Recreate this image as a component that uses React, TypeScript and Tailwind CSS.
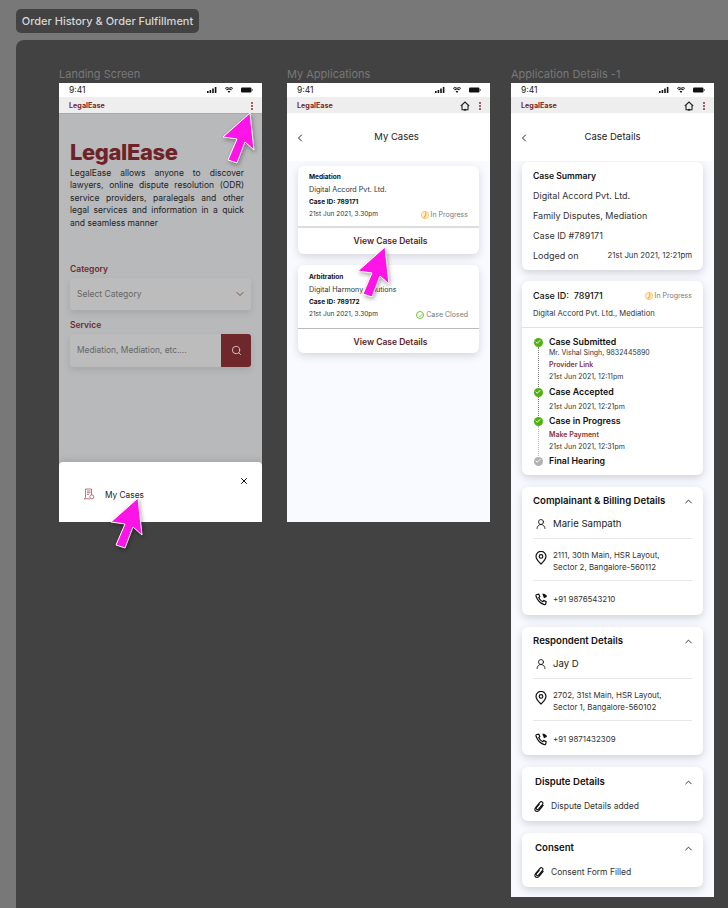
import { ChevronDown, ChevronLeft, ChevronUp, Check, Search, UserRound, X } from 'lucide-react';
import type { ReactNode } from 'react';

// Order history board: three phone frames with pink callout arrows on top

const StatusBar = () => (
  <div className="flex h-[14px] items-center justify-between bg-white pl-[10px] pr-[9px] text-[8.5px] font-normal text-[#222]">
    <span>9:41</span>
    <div className="flex items-center gap-[8px]">
      <svg width="10" height="6" viewBox="0 0 10 6" fill="#111">
        <rect x="0" y="4" width="1.6" height="2" />
        <rect x="2.6" y="3" width="1.6" height="3" />
        <rect x="5.2" y="1.5" width="1.6" height="4.5" />
        <rect x="7.8" y="0" width="1.6" height="6" />
      </svg>
      <svg width="8" height="6" viewBox="0 0 8 6" fill="#111">
        <path d="M4 6 2.7 4.4a2 2 0 0 1 2.6 0zM1.9 3.5 1.1 2.6a4.4 4.4 0 0 1 5.8 0l-.8.9a3.2 3.2 0 0 0-4.2 0zM.5 1.9 0 1.2a6 6 0 0 1 8 0l-.5.7a5.3 5.3 0 0 0-7 0z" />
      </svg>
      <svg width="12" height="6" viewBox="0 0 12 6" fill="#111">
        <rect x="0" y="0.5" width="10.5" height="5" rx="1.2" />
        <rect x="11" y="2" width="1" height="2" fill="#888" />
      </svg>
    </div>
  </div>
);

const Dots = () => (
  <span className="flex flex-col gap-[1px]">
    <span className="h-[2px] w-[2px] rounded-full bg-[#8a2f36]" />
    <span className="h-[2px] w-[2px] rounded-full bg-[#8a2f36]" />
    <span className="h-[2px] w-[2px] rounded-full bg-[#8a2f36]" />
  </span>
);

const HomeIcon = () => (
  <svg width="10" height="10" viewBox="0 0 10 10" fill="none" stroke="#222" strokeWidth="1.1">
    <path d="M.8 5 5 1l4.2 4" />
    <path d="M2 4.2v4.6h6V4.2" />
    <path d="M3.8 8.8h2.4" strokeWidth="1.8" />
  </svg>
);

const AppBar = ({ home }: { home?: boolean }) => (
  <div className="flex h-[16px] items-center justify-between bg-[#eeeeee] pl-[10px] pr-[9px] pt-[2px]">
    <span className="text-[7.2px] font-bold text-[#7a2a30]">LegalEase</span>
    <div className="flex items-center gap-[9px]">
      {home && <HomeIcon />}
      <Dots />
    </div>
  </div>
);

const PageTitle = ({ title, className }: { title: string; className?: string }) => (
  <div className={`relative flex h-[48px] items-center justify-center bg-white pt-px text-[9.5px] text-[#222] ${className ?? ''}`}>
    <ChevronLeft className="absolute left-[7px] h-[12px] w-[12px] text-[#222]" strokeWidth={2} />
    {title}
  </div>
);

const ProgressIcon = () => (
  <svg width="8" height="8" viewBox="0 0 8 8">
    <circle cx="4" cy="4" r="3.6" fill="#fff3d6" stroke="#fbb13c" strokeWidth="0.7" />
    <path d="M4 .4A3.6 3.6 0 0 1 2 7L4 4z" fill="#fbb13c" />
  </svg>
);

const ClosedIcon = () => (
  <span className="flex h-[8px] w-[8px] items-center justify-center rounded-full border border-[#6cc32b]">
    <Check className="h-[5px] w-[5px] text-[#6cc32b]" strokeWidth={4} />
  </span>
);

const CaseCard = ({ type, company, id, status, icon, top, rule }: { type: string; company: string; id: string; status: string; icon: ReactNode; top: string; rule: string }) => (
  <div className="h-[88px] rounded-[6px] bg-white px-[11px] shadow-[0_3px_8px_rgba(0,0,0,0.14)]">
    <div className={`text-[6.5px] text-[#333] ${top}`}>
      <div className="flex h-[12.4px] items-center font-bold text-[#111]">{type}</div>
      <div className="flex h-[12.4px] items-center text-[7.2px]">{company}</div>
      <div className="flex h-[12.4px] items-center font-bold text-[#111]">Case ID: {id}</div>
      <div className="flex h-[12.4px] items-center justify-between">
        <span>21st Jun 2021, 3.30pm</span>
        <span className="flex items-center gap-[2px] text-[7px] text-[#777]">
          {icon}
          {status}
        </span>
      </div>
    </div>
    <div className={`-mx-[11px] flex items-center justify-center pl-[4px] text-[8.5px] font-semibold text-[#5b2226] ${rule}`}>
      View Case Details
    </div>
  </div>
);

const Card = ({ className, children }: { className: string; children: ReactNode }) => (
  <div className={`rounded-[6px] bg-white shadow-[0_3px_8px_rgba(0,0,0,0.16)] ${className}`}>{children}</div>
);

const StepDot = ({ done }: { done?: boolean }) => (
  <span className={`flex h-[9px] w-[9px] shrink-0 items-center justify-center rounded-full ${done ? 'bg-[#4fb30d]' : 'bg-[#b3b0b0]'}`}>
    <Check className="h-[6px] w-[6px] text-white" strokeWidth={4} />
  </span>
);

const Step = ({ title, done, height, line, children }: { title: string; done?: boolean; height: string; line?: string; children?: ReactNode }) => (
  <div className={`flex gap-[6.5px] ${height}`}>
    <div className="flex w-[9px] flex-col items-center pt-[0.5px]">
      <StepDot done={done} />
      {line && <span className={`w-0 flex-1 border-l border-dotted ${line}`} />}
    </div>
    <div className="flex-1">
      <div className="flex h-[10px] items-center text-[8.8px] font-semibold text-[#111]">{title}</div>
      {children}
    </div>
  </div>
);

const Detail = ({ children, link }: { children: ReactNode; link?: boolean }) => (
  <div className={`flex h-[12px] items-center text-[7px] ${link ? 'font-semibold text-[#8a2f3c]' : 'text-[#333]'}`}>{children}</div>
);

const PinIcon = () => (
  <svg className="mt-[2px] shrink-0" width="12" height="14" viewBox="0 0 12 14" fill="none" stroke="#111" strokeWidth="1.2">
    <path d="M6 13C3.2 10.2 1 8 1 5.4a5 5 0 0 1 10 0C11 8 8.8 10.2 6 13z" />
    <circle cx="6" cy="5.4" r="1.8" />
  </svg>
);

const PhoneIcon = () => (
  <svg className="shrink-0" width="13" height="13" viewBox="0 0 13 13" fill="none" stroke="#111" strokeWidth="1.2">
    <path d="M1.9 1.5 3.8 1.2l1 2.4-1.1 1c.7 1.7 2.2 3.3 4 4.1l1-1.1 2.4 1.1-.3 1.9c-.1.8-.8 1.2-1.5 1C5.7 10.5 2.3 7 1 3c-.2-.7.2-1.4.9-1.5z" />
    <path d="M7.3.8C8.8.4 10.4 1 11.3 2.3L12 3.8 9 5.2z" fill="#111" stroke="none" />
  </svg>
);

const ClipIcon = () => (
  <svg className="shrink-0" width="11" height="11" viewBox="0 0 11 11" fill="none" stroke="#111" strokeWidth="1.1" strokeLinecap="round">
    <path d="M5.2 3.3 2.6 6.4c-.8 1-.2 2.3.8 2.2.6 0 1-.3 1.4-.8l3.7-4.5c.7-.9.5-2-.3-2.4-.8-.5-1.7-.2-2.3.5L1.6 6.700c-1.200 1.500-.8 3.100.6 3.600 1 .3 2 0 2.900-1l4.100-4.900" />
  </svg>
);

const ContactCard = ({ title, name, line1, line2, phone, className }: { title: string; name: string; line1: string; line2: string; phone: string; className: string }) => (
  <Card className={`h-[128px] ${className}`}>
    <div className="flex h-[28px] items-center justify-between pl-[11px] pr-[9px] text-[9.6px] font-semibold text-[#111]">
      {title}
      <ChevronUp className="h-[11px] w-[11px] text-[#222]" strokeWidth={2} />
    </div>
    <div className="mx-[11px]">
      <div className="flex h-[24px] items-center gap-[6px] border-b border-[#e8e8e8] pb-[5px] pl-[2px] text-[9.6px] text-[#222]">
        <UserRound className="h-[12px] w-[12px] text-[#111]" strokeWidth={1.7} />
        {name}
      </div>
      <div className="flex h-[42px] items-start gap-[6px] border-b border-[#e8e8e8] pl-[2px] pt-[10px] text-[7.9px] leading-[12.4px] text-[#333]">
        <PinIcon />
        <div>
          {line1}
          <br />
          {line2}
        </div>
      </div>
      <div className="flex h-[35px] items-center gap-[5px] pl-[2px] pt-[2px] text-[7.9px] text-[#333]">
        <PhoneIcon />
        {phone}
      </div>
    </div>
  </Card>
);

const AttachCard = ({ title, text, className }: { title: string; text: string; className: string }) => (
  <Card className={`h-[54px] ${className}`}>
    <div className="flex h-[30px] items-center justify-between pl-[13px] pr-[9px] text-[9.6px] font-semibold text-[#111]">
      {title}
      <ChevronUp className="h-[11px] w-[11px] text-[#222]" strokeWidth={2} />
    </div>
    <div className="flex h-[19px] items-center gap-[6px] pl-[12px] text-[8.5px] text-[#333]">
      <ClipIcon />
      {text}
    </div>
  </Card>
);

const Arrow = ({ className }: { className: string }) => (
  <svg className={`absolute drop-shadow-[1px_2px_2px_rgba(0,0,0,0.35)] ${className}`} width="34" height="54" viewBox="0 0 34 54">
    <polygon points="28,1 32,38 23,30 15,51 6,48 15,27 1,25" fill="#ff14e8" stroke="#ffffff" strokeWidth="1" />
  </svg>
);

const Frame = ({ label, width, height, children }: { label: string; width: string; height: string; children: ReactNode }) => (
  <div className={width}>
    <div className="flex h-[17px] items-center text-[11px] text-[#787878]">{label}</div>
    <div className={`overflow-hidden ${height}`}>{children}</div>
  </div>
);

const LandingScreen = () => (
  <div className="relative h-full bg-[#b8b9bb]">
    <StatusBar />
    <div className="border-b border-[#a9a9a9]">
      <AppBar />
    </div>
    <div className="px-[11px]">
      <div className="mt-[24px] flex h-[28px] items-center text-[22px] font-extrabold tracking-[-0.4px] text-[#6f2329]">LegalEase</div>
      <p className="mt-px w-[174px] text-justify text-[8.5px] leading-[12.4px] text-[#222]">
        LegalEase allows anyone to discover lawyers, online dispute resolution (ODR) service providers, paralegals and other legal services and information in a quick and seamless manner
      </p>
      <div className="mt-[34px] text-[8.5px] font-semibold leading-[12px] text-[#6f2a30]">Category</div>
      <div className="mt-[3px] flex h-[32px] w-[181px] items-center justify-between rounded-[3px] bg-[#bcbcbc] pl-[7px] pr-[5px] text-[8.5px] text-[#666] shadow-[0_3px_7px_rgba(0,0,0,0.1)]">
        Select Category
        <ChevronDown className="h-[12px] w-[12px] text-[#6f2a30]" strokeWidth={1.6} />
      </div>
      <div className="mt-[9px] text-[8.5px] font-semibold leading-[12px] text-[#6f2a30]">Service</div>
      <div className="mt-[3px] flex h-[33px] w-[181px] items-center justify-between rounded-[3px] bg-[#bcbcbc] pl-[7px] text-[8.4px] text-[#666] shadow-[0_3px_7px_rgba(0,0,0,0.1)]">
        Mediation, Mediation, etc....
        <span className="flex h-[33px] w-[30px] items-center justify-center rounded-r-[3px] bg-[#6f272c]">
          <Search className="h-[11px] w-[11px] text-[#ddd]" strokeWidth={1.8} />
        </span>
      </div>
    </div>
    {/* bottom sheet */}
    <div className="absolute bottom-0 left-0 right-0 flex h-[60px] justify-between rounded-t-[4px] bg-white pr-[13px] shadow-[0_-2px_6px_rgba(0,0,0,0.1)]">
      <div className="flex items-center gap-[10px] pl-[24px] pt-[4px] text-[8.3px] text-[#222]">
        <svg width="12" height="12" viewBox="0 0 12 12" fill="none" stroke="#a8565e" strokeWidth="0.8">
          <path d="M2.5 1h6v6M2.5 1v8.5c0 .8-.6 1.3-1.5 1.3h6" />
          <path d="M4 3h3.5M4 4.7h3.5M4 6.4h2" />
          <circle cx="8.8" cy="8.8" r="2" />
        </svg>
        <span className="pt-[2px]">My Cases</span>
      </div>
      <X className="mt-[14px] h-[10px] w-[10px] text-[#111]" strokeWidth={2.4} />
    </div>
  </div>
);

const CasesScreen = () => (
  <div className="h-full bg-[#f9faff]">
    <StatusBar />
    <AppBar home />
    <PageTitle title="My Cases" className="pl-[16px]" />
    <div className="flex flex-col gap-[11px] px-[11px] pt-[5px]">
      <CaseCard
        type="Mediation"
        company="Digital Accord Pvt. Ltd."
        id="789171"
        status="In Progress"
        icon={<ProgressIcon />}
        top="h-[60px] pt-[6px]"
        rule="h-[28px] border-t-2 border-[#dddddd]"
      />
      <CaseCard
        type="Arbitration"
        company="Digital Harmony Solutions"
        id="789172"
        status="Case Closed"
        icon={<ClosedIcon />}
        top="h-[63px] pt-[7px]"
        rule="h-[25px] border-t border-[#bbbbbb] pt-[2px]"
      />
    </div>
  </div>
);

const DetailsScreen = () => (
  <div className="h-full bg-[#f9faff]">
    <StatusBar />
    <AppBar home />
    <PageTitle title="Case Details" />
    <div className="px-[11px] pt-px">
      <Card className="h-[108px] pl-[11px] pr-[11px] pt-[4px] text-[9px] text-[#333]">
        <div className="flex h-[20px] items-center text-[8.6px] font-semibold text-[#111]">Case Summary</div>
        <div className="flex h-[20px] items-center">Digital Accord Pvt. Ltd.</div>
        <div className="flex h-[20px] items-center">Family Disputes, Mediation</div>
        <div className="flex h-[20px] items-center">Case ID #789171</div>
        <div className="flex h-[20px] items-center justify-between">
          <span>Lodged on</span>
          <span className="text-[7.8px]">21st Jun 2021, 12:21pm</span>
        </div>
      </Card>
      <Card className="mt-[11px] h-[194px]">
        <div className="border-b border-[#e2e2e2] px-[11px] pb-[6px] pt-[8px]">
          <div className="flex h-[14px] items-center justify-between">
            <span className="text-[9px] font-medium text-[#111]">Case ID:&nbsp; 789171</span>
            <span className="flex items-center gap-[2px] text-[7px] text-[#777]">
              <ProgressIcon />
              In Progress
            </span>
          </div>
          <div className="mt-[4px] flex h-[14px] items-center text-[7.6px] text-[#333]">Digital Accord Pvt. Ltd., Mediation</div>
        </div>
        <div className="pl-[11.5px] pt-[9px]">
          <Step title="Case Submitted" done height="h-[50px]" line="border-[#777]">
            <Detail>Mr. Vishal Singh, 9832445890</Detail>
            <Detail link>Provider Link</Detail>
            <Detail>21st Jun 2021, 12:11pm</Detail>
          </Step>
          <Step title="Case Accepted" done height="h-[29px]" line="border-[#777]">
            <div className="mt-[4px]">
              <Detail>21st Jun 2021, 12:21pm</Detail>
            </div>
          </Step>
          <Step title="Case in Progress" done height="h-[40px]" line="border-[#bbb]">
            <div className="mt-[3px]">
              <Detail link>Make Payment</Detail>
              <Detail>21st Jun 2021, 12:31pm</Detail>
            </div>
          </Step>
          <Step title="Final Hearing" height="h-[10px]" />
        </div>
      </Card>
      <ContactCard
        className="mt-[12px]"
        title="Complainant & Billing Details"
        name="Marie Sampath"
        line1="2111, 30th Main, HSR Layout,"
        line2="Sector 2, Bangalore-560112"
        phone="+91 9876543210"
      />
      <ContactCard
        className="mt-[12px]"
        title="Respondent Details"
        name="Jay D"
        line1="2702, 31st Main, HSR Layout,"
        line2="Sector 1, Bangalore-560102"
        phone="+91 9871432309"
      />
      <AttachCard className="mt-[12px]" title="Dispute Details" text="Dispute Details added" />
      <AttachCard className="mt-[12px]" title="Consent" text="Consent Form Filled" />
    </div>
  </div>
);

export default function App() {
  return (
    <div className="relative h-[908px] w-[728px] overflow-hidden bg-[#787878] pl-[16px] pt-[9px] font-['Inter',sans-serif]">
      <div className="flex h-[24px] w-[183px] items-center justify-center rounded-[5px] bg-[#434343] text-[11px] font-medium text-[#d6d6d6]">
        Order History &amp; Order Fulfillment
      </div>
      <div className="mt-[7px] h-[900px] w-[760px] rounded-[8px] bg-[#424242] pl-[43px] pt-[26px]">
        <div className="flex items-start">
          <Frame label="Landing Screen" width="w-[203px]" height="h-[439px]">
            <LandingScreen />
          </Frame>
          <div className="ml-[25px]">
            <Frame label="My Applications" width="w-[203px]" height="h-[439px]">
              <CasesScreen />
            </Frame>
          </div>
          <div className="ml-[21px]">
            <Frame label="Application Details -1" width="w-[203px]" height="h-[814px]">
              <DetailsScreen />
            </Frame>
          </div>
        </div>
      </div>
      <Arrow className="left-[222px] top-[112px]" />
      <Arrow className="left-[110px] top-[497px]" />
      <Arrow className="left-[357px] top-[246px]" />
    </div>
  );
}
